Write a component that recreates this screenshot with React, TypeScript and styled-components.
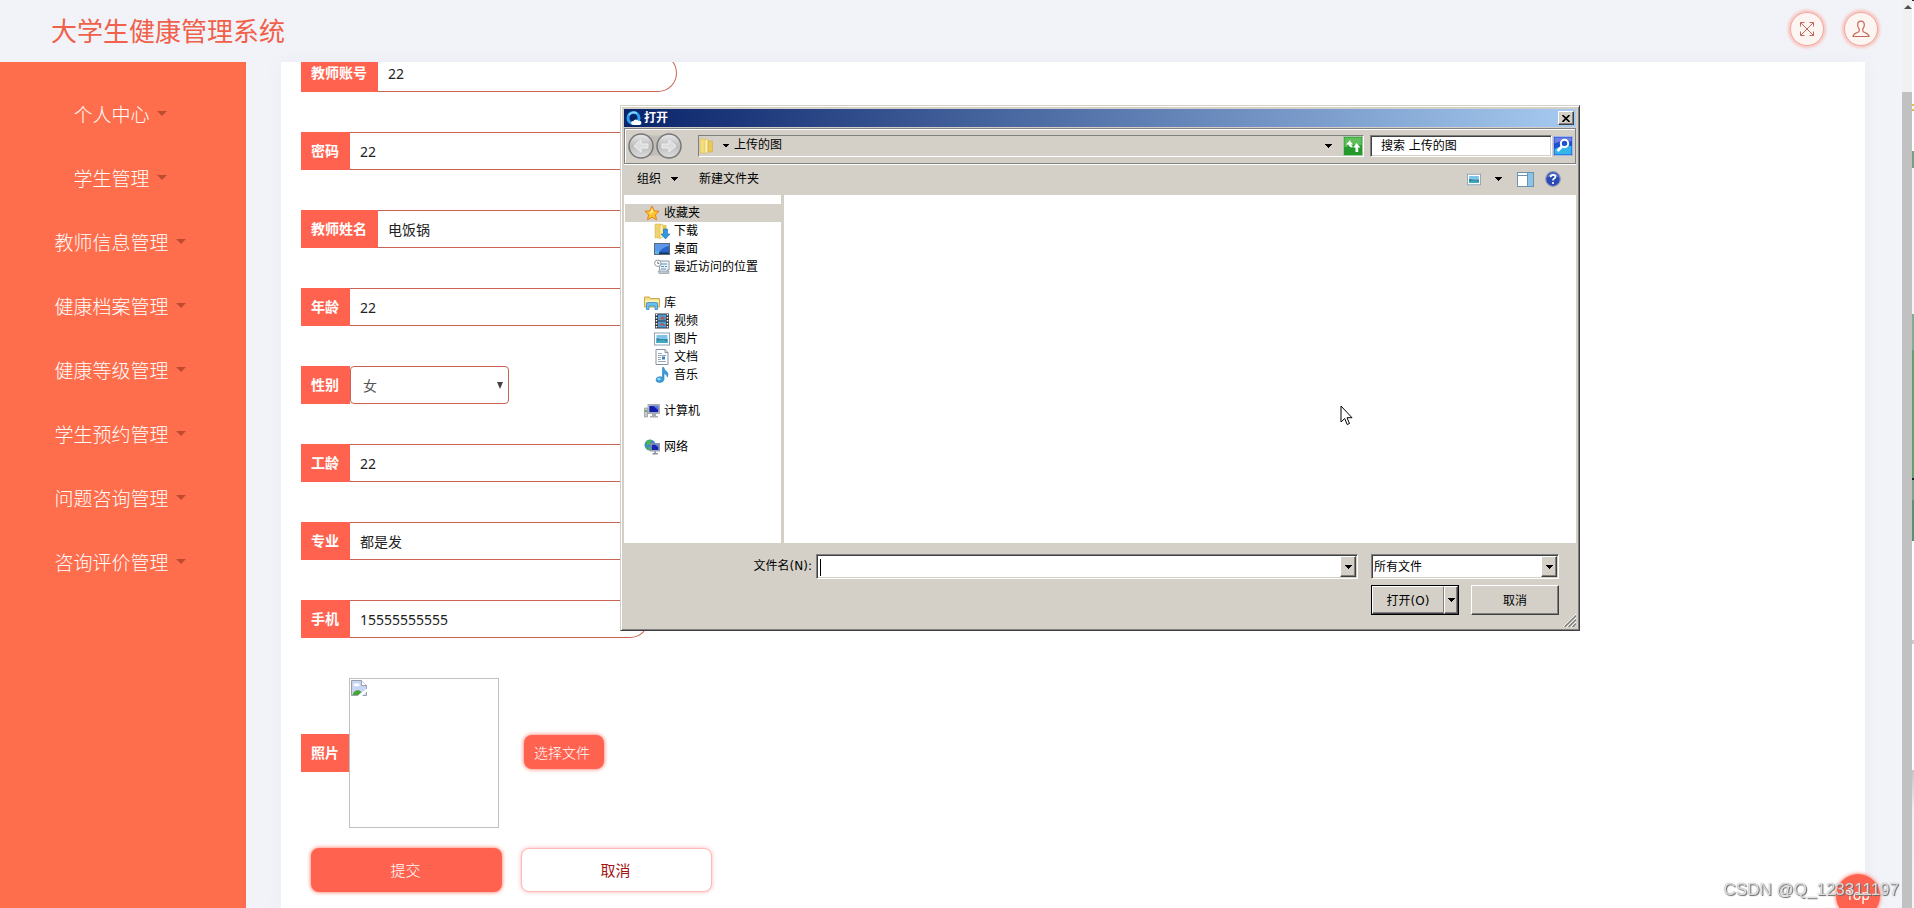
import React from "react";
import styled, { createGlobalStyle, css } from "styled-components";

const GlobalStyle = createGlobalStyle`
  * { box-sizing: border-box; }
  body {
    margin: 0;
    background: #f2f3f8;
    font-family: "Noto Sans", "Noto Sans CJK SC", sans-serif;
    font-size: 14px;
    overflow: hidden;
  }
  button, input, select { font-family: inherit; }
`;

/* ---------- page frame ---------- */

const Shell = styled.div`
  display: flex;
  height: 100vh;
  overflow: hidden;
`;

const Page = styled.div`
  flex: 1;
  min-width: 0;
  display: flex;
  flex-direction: column;
`;

const Header = styled.header`
  display: flex;
  justify-content: space-between;
  align-items: flex-start;
  padding: 12px 24px 14px 51px;
`;

const Title = styled.h1`
  margin: 0;
  font-size: 26px;
  line-height: 36px;
  font-weight: 400;
  color: #f0604a;
  font-family: "Noto Sans CJK SC", sans-serif;
`;

const HeaderTools = styled.div`
  display: flex;
  gap: 20px;
`;

const RoundButton = styled.button`
  width: 34px;
  height: 34px;
  padding: 0;
  display: grid;
  place-items: center;
  border: 1px solid #f3aaa2;
  border-radius: 50%;
  background: #fdf5f2;
  box-shadow: 0 0 3px 2px #f7c3be;
`;

const Body = styled.div`
  flex: 1;
  min-height: 0;
  display: flex;
`;

const Sidebar = styled.nav`
  width: 246px;
  flex: none;
  background: #ff6e4c;
  padding: 19px 0;
`;

const MenuList = styled.ul`
  list-style: none;
  margin: 0;
  padding: 0;
`;

const MenuLink = styled.a`
  display: flex;
  height: 64px;
  padding-right: 6px;
  align-items: center;
  justify-content: center;
  gap: 7px;
  color: #fff;
  font-size: 19px;
  font-weight: 300;
  text-decoration: none;
  font-family: "Noto Sans CJK SC", sans-serif;
`;

const MenuCaret = styled.span`
  border: 5px solid transparent;
  border-top-color: #bf4a30;
  border-bottom: 0;
`;

const Card = styled.main`
  flex: 1;
  min-width: 0;
  margin: 0 37px 0 35px;
  padding: 0 20px;
  overflow: hidden;
  background: #fff;
  box-shadow: 0 0 16px rgba(120, 130, 180, 0.06);
`;

/* ---------- form ---------- */

const Form = styled.form`
  margin-top: -8px;
  display: flex;
  flex-direction: column;
  gap: 20px;
`;

const Fields = styled.div`
  display: flex;
  flex-direction: column;
  gap: 40px;
`;

const Field = styled.div`
  display: flex;
  align-items: center;
`;

const FieldLabel = styled.label`
  height: 38px;
  line-height: 38px;
  padding: 0 11px 0 10px;
  background: #ff6350;
  color: #fff;
  font-weight: 700;
  white-space: nowrap;
`;

const TextInput = styled.input`
  width: 299px;
  height: 38px;
  padding: 0 10px;
  border: 1px solid #cb6355;
  border-left: 0;
  border-radius: 0 19px 19px 0;
  background: #fff;
  color: #222;
  font-size: 14px;
  outline: none;
`;

const SelectWrap = styled.div`
  display: grid;
  align-items: center;
  width: 159px;
  & > * { grid-area: 1 / 1; }
  & > svg { justify-self: end; margin-right: 6px; pointer-events: none; }
`;

const GenderSelect = styled.select`
  appearance: none;
  height: 38px;
  padding: 0 12px;
  border: 1px solid #cb6355;
  border-radius: 4px;
  background: #fff;
  color: #555;
  font-size: 14px;
  outline: none;
`;

const Photo = styled.div`
  width: 150px;
  height: 150px;
  margin: 0 25px 0 -1px;
  padding: 1px;
  border: 1px solid #c0c0c0;
`;

const SolidButton = styled.button`
  width: 80px;
  height: 34px;
  margin-bottom: 2px;
  padding: 0 10px;
  text-align: left;
  white-space: nowrap;
  border: 0;
  border-radius: 8px;
  background: #ff6350;
  color: #fff;
  font-size: 14px;
  font-weight: 300;
  box-shadow: 0 0 4px #ff6350;
`;

const Actions = styled.div`
  display: flex;
  gap: 19px;
  padding-left: 10px;
`;

const ActionButton = styled.button<{ $primary?: boolean }>`
  width: 191px;
  height: 44px;
  padding: 0 2px 1px 0;
  border-radius: 8px;
  font-size: 15px;
  font-weight: ${(p) => (p.$primary ? 300 : 400)};
  border: ${(p) => (p.$primary ? "0" : "1px solid #fbb9b9")};
  background: ${(p) => (p.$primary ? "#ff6350" : "#fff")};
  color: ${(p) => (p.$primary ? "#fff" : "#a31515")};
  box-shadow: 0 0 4px ${(p) => (p.$primary ? "#ff6350" : "#ffb3b3")};
`;

/* ---------- right edge ---------- */

const ScrollTrack = styled.div`
  width: 10px;
  flex: none;
  display: flex;
  flex-direction: column;
  background: #f1f1f1;
`;

const ScrollHead = styled.div`
  height: 92px;
  flex: none;
  padding: 5px 0 0 2px;
  & > svg { display: block; }
`;

const ScrollThumb = styled.div`
  flex: 1;
  background: #c1c1c1;
`;

const EdgeStrip = styled.div`
  width: 2px;
  flex: none;
  background: linear-gradient(
    #222 0 1px, #fff 1px 104px, #e2c23c 104px 106px, #fff 106px 109px, #e2c23c 109px 111px,
    #fff 111px 151px, #7d9c86 151px 168px, #f4f4f4 168px 314px,
    #86ab95 314px 350px, #5fa06d 350px 478px, #222 478px 480px, #7fa38c 480px 500px,
    #5f8f72 500px 541px, #fff 541px 640px, #ccc 640px 644px, #fff 644px 770px,
    #c4c4c4 770px, #f0f0f0 810px, #f4f4f4 908px
  );
`;

const TopButton = styled.button`
  position: fixed;
  right: 34px;
  bottom: -10px;
  width: 44px;
  height: 44px;
  padding: 0 0 4px;
  border: 0;
  border-radius: 50%;
  background: #ff6350;
  color: #fff;
  font-size: 14px;
  box-shadow: 0 0 4px #ff6350;
`;

const Watermark = styled.span`
  position: fixed;
  right: 15px;
  bottom: 8px;
  font: 17px/20px "Liberation Sans", sans-serif;
  color: rgba(255, 255, 255, 0.75);
  text-shadow: 1px 1px 1px #666, 0 0 1px #777;
  pointer-events: none;
`;

const Pointer = styled.svg`
  position: fixed;
  left: 1340px;
  top: 405px;
  pointer-events: none;
`;

/* ---------- file dialog ---------- */

const raised = css`
  border: 1px solid;
  border-color: #fff #404040 #404040 #fff;
  box-shadow: inset -1px -1px 0 #808080;
  background: #d4d0c8;
`;

const sunken = css`
  border: 1px solid;
  border-color: #808080 #fff #fff #808080;
  box-shadow: inset 1px 1px 0 #404040, inset -1px -1px 0 #d4d0c8;
  background: #fff;
`;

const Dialog = styled.section`
  position: fixed;
  left: 620px;
  top: 105px;
  width: 960px;
  height: 526px;
  display: flex;
  flex-direction: column;
  padding: 3px;
  border: 1px solid;
  border-color: #d4d0c8 #404040 #404040 #d4d0c8;
  box-shadow: inset 1px 1px 0 #fff, inset -1px -1px 0 #808080;
  background: #d4d0c8;
  color: #000;
  font-family: "DejaVu Sans", "Noto Sans CJK SC", sans-serif;
  font-size: 12px;
`;

const TitleBar = styled.div`
  height: 18px;
  flex: none;
  display: flex;
  align-items: center;
  gap: 2px;
  padding: 0 2px;
  background: linear-gradient(90deg, #0a246a, #a6caf0);
`;

const DialogTitle = styled.h2`
  flex: 1;
  margin: 0;
  font-size: 12px;
  line-height: 18px;
  color: #fff;
`;

const CloseButton = styled.button`
  ${raised}
  width: 16px;
  height: 14px;
  padding: 0;
  display: grid;
  place-items: center;
`;

const NavBar = styled.div`
  height: 36px;
  flex: none;
  margin-top: 1px;
  display: flex;
  align-items: center;
  padding: 0 2px 0 3px;
  border: 1px solid #808080;
  box-shadow: inset 1px 1px 0 #fff, 0 1px 0 #fff;
`;

const AddressBox = styled.div`
  flex: 1;
  height: 22px;
  margin: 0 6px 0 14px;
  display: flex;
  align-items: center;
  border: 1px solid;
  border-color: #808080 #fff #fff #808080;
`;

const AddressText = styled.span`
  flex: 1;
  padding: 0 0 2px 5px;
  line-height: 16px;
`;

const IconButton = styled.button<{ $gap?: number }>`
  padding: 0;
  border: 0;
  background: none;
  display: grid;
  place-items: center;
  margin-left: ${(p) => p.$gap ?? 0}px;
`;

const SearchInput = styled.input`
  ${sunken}
  width: 182px;
  height: 22px;
  margin-right: 1px;
  padding: 0 10px;
  font-size: 12px;
  color: #000;
  &::placeholder { color: #000; opacity: 1; }
`;

const ToolBar = styled.div`
  height: 31px;
  flex: none;
  display: flex;
  align-items: center;
  padding: 0 15px 1px 13px;
`;

const ToolText = styled.button`
  padding: 0;
  border: 0;
  background: none;
  display: flex;
  align-items: center;
  gap: 10px;
  margin-right: 21px;
  font-size: 12px;
  line-height: 18px;
  color: #000;
`;

const Spacer = styled.div`
  flex: 1;
`;

const Panes = styled.div`
  flex: 1;
  display: flex;
  background: #fff;
`;

const Tree = styled.ul`
  width: 160px;
  margin: 0;
  padding: 9px 0 0 1px;
  list-style: none;
  border-right: 3px solid #d4d0c8;
`;

const TreeRow = styled.li<{ $child?: boolean; $selected?: boolean; $spaced?: boolean }>`
  height: 18px;
  display: flex;
  align-items: center;
  gap: 4px;
  line-height: 18px;
  padding-left: ${(p) => (p.$child ? 29 : 19)}px;
  margin-top: ${(p) => (p.$spaced ? 18 : 0)}px;
  background: ${(p) => (p.$selected ? "#d4d0c8" : "transparent")};
  & > svg { flex: none; }
`;

const Footer = styled.div`
  height: 84px;
  flex: none;
  display: grid;
  grid-template-columns: 1fr 542px 188px;
  column-gap: 13px;
  row-gap: 6px;
  align-content: start;
  padding: 11px 17px 0 0;
`;

const FileLabel = styled.label`
  margin-right: -9px;
  text-align: right;
  line-height: 25px;
`;

const Combo = styled.div`
  ${sunken}
  display: flex;
  height: 25px;
  padding: 1px;
`;

const ComboInput = styled.input`
  flex: 1;
  min-width: 0;
  padding: 0 2px;
  border: 0;
  outline: none;
  font-size: 12px;
  background: transparent;
`;

const Caret = styled.span`
  width: 1px;
  height: 17px;
  margin: 3px 0 0 2px;
  background: #000;
`;

const ComboSelect = styled.select`
  appearance: none;
  flex: 1;
  padding: 0 1px;
  border: 0;
  background: transparent;
  font-size: 12px;
  color: #000;
`;

const DropButton = styled.button`
  ${raised}
  width: 16px;
  padding: 0;
  display: grid;
  place-items: center;
`;

const DialogButtons = styled.div`
  grid-column: 3;
  display: flex;
  gap: 12px;
`;

const SplitButton = styled.div`
  width: 88px;
  height: 30px;
  display: flex;
  border: 1px solid #000;
`;

const ClassicButton = styled.button<{ $width: number }>`
  ${raised}
  width: ${(p) => p.$width}px;
  padding: 0 0 1px;
  display: grid;
  place-items: center;
  font-size: 12px;
  color: #000;
`;

const SplitMain = styled(ClassicButton)`
  border-right-color: #808080;
  box-shadow: inset 0 -1px 0 #808080;
`;

const Grip = styled.svg`
  position: absolute;
  right: 3px;
  bottom: 3px;
`;

/* ---------- icons ---------- */

const Down = ({ w = 7 }: { w?: number }) => (
  <svg width={w} height="4" viewBox="0 0 8 4" preserveAspectRatio="none" shapeRendering="crispEdges">
    <path d="M0 0h8L4 4z" fill="#000" />
  </svg>
);

const ExpandIcon = () => (
  <svg width="16" height="16" viewBox="0 0 16 16" fill="none" stroke="#c4685c" strokeWidth="1">
    <path d="M1.5 1.5l13 13M14.5 1.5l-13 13M1.5 5.5v-4h4M10.5 1.5h4v4M14.5 10.5v4h-4M5.5 14.5h-4v-4" />
  </svg>
);

const PersonIcon = () => (
  <svg width="18" height="18" viewBox="0 0 18 18" fill="none" stroke="#c4685c" strokeWidth="1.2">
    <path d="M9 1.2c-2.300 0-3.300 1.500-3.300 3.800 0 1.700.5 3 1.500 4v2c0 .8-1 1.200-2.500 1.800C2.300 13.700 1.200 14.300 1 16.500h16c-.2-2.200-1.300-2.800-3.700-3.700-1.500-.6-2.500-1-2.500-1.800V9c1-1 1.500-2.300 1.500-4 0-2.300-1-3.800-3.300-3.800z" />
  </svg>
);

const BrokenImage = () => (
  <svg width="16" height="16" viewBox="0 0 16 16">
    <path d="M.5.5h10l5 5v10H.5z" fill="#c6d5f5" stroke="#9aa0a8" />
    <path d="M10.5.5v5h5" fill="#fff" stroke="#9aa0a8" />
    <ellipse cx="5.500" cy="4.800" rx="3" ry="1.500" fill="#fff" />
    <path d="M1.500 15c1-4 4-5.500 7-4.500l2 1.500-3 3z" fill="#45a532" />
    <path d="M6.500 16l9.500-7.500v3L11 16z" fill="#fff" />
  </svg>
);

const BrowserIcon = () => (
  <svg width="16" height="16" viewBox="0 0 16 16">
    <circle cx="7.500" cy="8" r="5.500" fill="#0a246a" stroke="#2da0ee" strokeWidth="3" />
    <path d="M3 5a5.500 5.500 0 0 1 8-1.500" fill="none" stroke="#8ad6ff" strokeWidth="1.500" />
    <path d="M7 15a2 2 0 0 1 .3-4 3 3 0 0 1 5.200 0A2 2 0 0 1 14 15z" fill="#fff" />
  </svg>
);

const NavArrows = () => (
  <svg width="56" height="28" viewBox="0 0 56 28">
    <defs>
      <linearGradient id="knob" x1="0" y1="0" x2="0" y2="1">
        <stop offset="0" stopColor="#e9e9e9" />
        <stop offset=".5" stopColor="#bdbdbd" />
        <stop offset="1" stopColor="#dedede" />
      </linearGradient>
    </defs>
    <path d="M13 1q15 5 29 0v25q-14-5-29 0z" fill="#c2beb7" />
    {[13, 41].map((cx) => (
      <circle key={cx} cx={cx} cy="14" r="12" fill="url(#knob)" stroke="#77777a" strokeWidth="1.500" />
    ))}
    <path
      d="M6 14l7-6v4h7v4h-7v4zM48 14l-7-6v4h-7v4h7v4z"
      fill="#dcdcdc"
      stroke="#f0f0f0"
    />
  </svg>
);

const FolderIcon = () => (
  <svg width="16" height="16" viewBox="0 0 16 16">
    <path d="M1 1h6v14H1z" fill="#f3dc7c" stroke="#d4b550" strokeWidth=".5" />
    <path d="M6 2.500l3-1.500v13l-3 1.500z" fill="#fff3b4" stroke="#d4b550" strokeWidth=".5" />
    <path d="M9 3h4.500v11H9z" fill="#ecc956" stroke="#c9a63c" strokeWidth=".5" />
  </svg>
);

const RefreshIcon = () => (
  <svg width="20" height="20" viewBox="0 0 20 20">
    <rect x=".5" y=".5" width="19" height="19" rx="1" fill="#249a2c" stroke="#a3c9a3" />
    <path d="M1.500 1.500h17v8q-8-3-17 2z" fill="#5fbf5a" />
    <path d="M7.500 3.500L3 8.500h2.700q.3 3 3.800 3V9.500Q8 9.500 8 8.500h2L7 5z" fill="#fff" />
    <path d="M13.500 7l4 4.500h-2.300V16h-2.700v-4.500H10z" fill="#fff" />
  </svg>
);

const SearchIcon = () => (
  <svg width="20" height="20" viewBox="0 0 20 20">
    <rect x=".5" y=".5" width="19" height="19" rx="1" fill="#1f4fd0" stroke="#9fb6e6" />
    <path d="M1.500 13q9-5 17-3v8.500h-17z" fill="#35b4ea" />
    <path d="M1.500 1.500h17v4q-9-2-17 2z" fill="#6f7fe6" />
    <circle cx="11.500" cy="7.500" r="3.700" fill="none" stroke="#fff" strokeWidth="2" />
    <path d="M8.800 10.500L4.500 15" stroke="#fff" strokeWidth="2.600" />
  </svg>
);

const Picture = ({ w = 16, h = 16 }: { w?: number; h?: number }) => (
  <svg width={w} height={h} viewBox="0 0 16 16">
    <rect x=".5" y="2" width="15" height="12" fill="#fff" stroke="#8ba0b4" />
    <path d="M2.500 4h11v8h-11z" fill="#7ec4e8" />
    <path d="M2.500 7q4 2 11 1v4h-11z" fill="#2b7f8e" />
    <path d="M2.500 10q5-2 11 .5V12h-11z" fill="#3fa9c4" />
  </svg>
);

const PaneIcon = () => (
  <svg width="17" height="15" viewBox="0 0 17 15">
    <rect x=".5" y=".5" width="16" height="14" fill="#fff" stroke="#6b93b4" />
    <path d="M.5 3.500h10M10.500.5v14" stroke="#6b93b4" />
    <path d="M11 1h5v13h-5z" fill="#8cc4e4" />
  </svg>
);

const HelpIcon = () => (
  <svg width="16" height="16" viewBox="0 0 16 16">
    <circle cx="8" cy="8" r="7.300" fill="#2b49b4" stroke="#8c98b8" strokeWidth="1.200" />
    <path d="M2.500 6a6 6 0 0 1 11 0q-5-2-11 0z" fill="#8098e0" />
    <path d="M5.700 6.200q0-2.400 2.400-2.400 2.300 0 2.300 2 0 1.200-1.200 1.800Q8 8.200 8 9.400" fill="none" stroke="#fff" strokeWidth="1.700" />
    <circle cx="8" cy="12" r="1.100" fill="#fff" />
  </svg>
);

const StarIcon = () => (
  <svg width="16" height="16" viewBox="0 0 16 16">
    <path d="M8 1l2.100 4.700 5 .6-3.700 3.400 1.100 5.100L8 12.200l-4.500 2.600 1.100-5.100L.9 6.300l5-.6z" fill="#fcc42c" stroke="#ea7e1c" />
    <path d="M8 3.200l1.400 3.300L5.500 10z" fill="#fff0a0" />
  </svg>
);

const DownloadIcon = () => (
  <svg width="16" height="16" viewBox="0 0 16 16">
    <path d="M1 1h6v14H1z" fill="#efd36c" stroke="#cfae4a" strokeWidth=".5" />
    <path d="M6 2.500L9 1v13l-3 1.500z" fill="#fff2b0" stroke="#cfae4a" strokeWidth=".5" />
    <path d="M9 2h3.500v10H9z" fill="#e7c454" />
    <path d="M9.500 6h4v5H16l-4.500 5L7 11h2.500z" fill="#2f9ae0" stroke="#1c6cae" strokeWidth=".6" />
  </svg>
);

const DesktopIcon = () => (
  <svg width="16" height="16" viewBox="0 0 16 16">
    <rect x=".5" y="2.500" width="15" height="11" fill="#2b64c8" stroke="#5a6a7a" />
    <path d="M1 3h14v2Q9 6 5 11H1z" fill="#5c98ea" />
    <path d="M1 11.500h14V13H1z" fill="#16345c" />
    <path d="M1 10h4v3H1z" fill="#58b4e8" />
  </svg>
);

const RecentIcon = () => (
  <svg width="16" height="16" viewBox="0 0 16 16">
    <path d="M5 2h10v9h-2v3H6z" fill="#eef3f8" stroke="#8d9aa8" />
    <path d="M4 12h11v2.500H5z" fill="#c0c8d2" stroke="#8d9aa8" strokeWidth=".6" />
    <path d="M7 5h6M7 7.500h3M11 7.500h2M7 10h5" stroke="#5b8fc0" />
    <circle cx="3.800" cy="4.200" r="3.200" fill="#fff" stroke="#8d9aa8" />
    <path d="M3.800 2.500v2h1.500" fill="none" stroke="#555" strokeWidth=".8" />
  </svg>
);

const LibraryIcon = () => (
  <svg width="16" height="16" viewBox="0 0 16 16">
    <path d="M.5 2h5l1 1.500h9V12H.5z" fill="#f2dc84" stroke="#c8ac50" />
    <path d="M1 5.500h14v1.500H1z" fill="#fff6c8" />
    <path d="M2.500 14.500V9q0-1.500 1.500-1.500h8q1.500 0 1.500 1.500v5.500H11V11H5v3.500z" fill="#6cc0ec" stroke="#3a8cc0" strokeWidth=".8" />
  </svg>
);

const VideoIcon = () => (
  <svg width="16" height="16" viewBox="0 0 16 16">
    <path d="M1 .5h14v15H1z" fill="#33383e" />
    <path d="M4 1.500h8v6H4zM4 8.500h8v6H4z" fill="#4d9ad8" />
    <path d="M6 6l2-3 3 2-1 2zM5 12l3-2 2 1 1 2z" fill="#b45a4a" />
    <path d="M2.500 1v14M13.500 1v14" stroke="#fff" strokeWidth="1.500" strokeDasharray="1.500 1.500" />
  </svg>
);

const DocumentIcon = () => (
  <svg width="16" height="16" viewBox="0 0 16 16">
    <path d="M2 .5h9l3 3v12H2z" fill="#fff" stroke="#8793a0" />
    <path d="M11 .5v3h3" fill="none" stroke="#8793a0" />
    <path d="M4 4.500h4M4 6.500h8M4 8.500h3M4 10.500h3M4 12.500h8" stroke="#9aa8b8" />
    <path d="M8 7.500h3v3H8z" fill="#3a7fc4" />
  </svg>
);

const MusicIcon = () => (
  <svg width="16" height="16" viewBox="0 0 16 16">
    <path d="M8.500.5h1.300q.4 2.500 2.800 4 2.400 2 .8 5.500-.3-3-3.400-3.500v6q-.5 3-4.500 3Q2 15.300 2 12.700q.3-3 4-3 1.500 0 2.500.6z" fill="#3a9fdc" stroke="#2a78b4" strokeWidth=".6" />
    <ellipse cx="5" cy="12" rx="1.700" ry="1.200" fill="#9adcf8" />
  </svg>
);

const ComputerIcon = () => (
  <svg width="16" height="16" viewBox="0 0 16 16">
    <path d="M.5 5h3v9h-3z" fill="#c8ccd0" stroke="#8a9096" strokeWidth=".7" />
    <path d="M1.200 7h1.600v2H1.200z" fill="#4aa83c" />
    <rect x="4" y="1.500" width="11.500" height="9" fill="#c4c8cc" stroke="#999ea4" strokeWidth=".8" />
    <path d="M5.300 2.800h9v6.400h-9z" fill="#1420a8" />
    <path d="M9 2.800h5.300V7z" fill="#5a78e4" />
    <path d="M8 11h4v2h2v1.500H6V13h2z" fill="#a8acb2" />
  </svg>
);

const NetworkIcon = () => (
  <svg width="16" height="16" viewBox="0 0 16 16">
    <circle cx="6" cy="6" r="5.500" fill="#3b8ad0" />
    <path d="M2 3q3-3 6-2L6 5 3 7zM4 8l3 1-1 2.500Q3.500 11 2 9z" fill="#4cb44c" />
    <rect x="6.500" y="4.500" width="9" height="7.500" fill="#c4c8cc" stroke="#80868e" strokeWidth=".8" />
    <path d="M7.500 5.500h7V11h-7z" fill="#1428b0" />
    <path d="M11 5.500h3.500v3z" fill="#6a8cf0" />
    <path d="M10.300 12h1.500v2h2v1.500H8.500V14h1.800z" fill="#8a9098" />
  </svg>
);

/* ---------- content ---------- */

const menu = [
  "个人中心",
  "学生管理",
  "教师信息管理",
  "健康档案管理",
  "健康等级管理",
  "学生预约管理",
  "问题咨询管理",
  "咨询评价管理",
];

type FieldDef = { id: string; label: string; value: string; select?: boolean };

const fields: FieldDef[] = [
  { id: "account", label: "教师账号", value: "22" },
  { id: "password", label: "密码", value: "22" },
  { id: "name", label: "教师姓名", value: "电饭锅" },
  { id: "age", label: "年龄", value: "22" },
  { id: "gender", label: "性别", value: "女", select: true },
  { id: "years", label: "工龄", value: "22" },
  { id: "major", label: "专业", value: "都是发" },
  { id: "phone", label: "手机", value: "15555555555" },
];

const tree = [
  { text: "收藏夹", Icon: StarIcon, selected: true },
  { text: "下载", Icon: DownloadIcon, child: true },
  { text: "桌面", Icon: DesktopIcon, child: true },
  { text: "最近访问的位置", Icon: RecentIcon, child: true },
  { text: "库", Icon: LibraryIcon, spaced: true },
  { text: "视频", Icon: VideoIcon, child: true },
  { text: "图片", Icon: Picture, child: true },
  { text: "文档", Icon: DocumentIcon, child: true },
  { text: "音乐", Icon: MusicIcon, child: true },
  { text: "计算机", Icon: ComputerIcon, spaced: true },
  { text: "网络", Icon: NetworkIcon, spaced: true },
];

const FileDialog = () => (
  <Dialog role="dialog" aria-label="打开">
    <TitleBar>
      <BrowserIcon />
      <DialogTitle>打开</DialogTitle>
      <CloseButton type="button" aria-label="关闭">
        <svg width="8" height="7" viewBox="0 0 8 7">
          <path d="M.5 0l7 7M7.500 0l-7 7" stroke="#000" strokeWidth="1.600" />
        </svg>
      </CloseButton>
    </TitleBar>
    <NavBar>
      <NavArrows />
      <AddressBox>
        <FolderIcon />
        <IconButton type="button" aria-label="展开" $gap={8}>
          <Down w={6} />
        </IconButton>
        <AddressText>上传的图</AddressText>
        <IconButton type="button" aria-label="历史">
          <Down />
        </IconButton>
        <IconButton type="button" aria-label="刷新" $gap={11}>
          <RefreshIcon />
        </IconButton>
      </AddressBox>
      <SearchInput aria-label="搜索" placeholder="搜索 上传的图" />
      <IconButton type="button" aria-label="查找">
        <SearchIcon />
      </IconButton>
    </NavBar>
    <ToolBar>
      <ToolText type="button">
        组织 <Down />
      </ToolText>
      <ToolText type="button">新建文件夹</ToolText>
      <Spacer />
      <IconButton type="button" aria-label="视图">
        <Picture w={14} h={15} />
      </IconButton>
      <IconButton type="button" aria-label="更多视图" $gap={14}>
        <Down />
      </IconButton>
      <IconButton type="button" aria-label="预览窗格" $gap={15}>
        <PaneIcon />
      </IconButton>
      <IconButton type="button" aria-label="帮助" $gap={11}>
        <HelpIcon />
      </IconButton>
    </ToolBar>
    <Panes>
      <Tree>
        {tree.map(({ text, Icon, child, selected, spaced }) => (
          <TreeRow key={text} $child={child} $selected={selected} $spaced={spaced}>
            <Icon />
            {text}
          </TreeRow>
        ))}
      </Tree>
    </Panes>
    <Footer>
      <FileLabel htmlFor="filename">文件名(N):</FileLabel>
      <Combo>
        <Caret />
        <ComboInput id="filename" />
        <DropButton type="button" aria-label="文件名列表">
          <Down />
        </DropButton>
      </Combo>
      <Combo>
        <ComboSelect aria-label="文件类型">
          <option>所有文件</option>
        </ComboSelect>
        <DropButton type="button" aria-label="类型列表" tabIndex={-1}>
          <Down />
        </DropButton>
      </Combo>
      <DialogButtons>
        <SplitButton>
          <SplitMain type="button" $width={72}>
            打开(O)
          </SplitMain>
          <ClassicButton type="button" $width={14} aria-label="打开方式">
            <Down />
          </ClassicButton>
        </SplitButton>
        <ClassicButton type="button" $width={88}>
          取消
        </ClassicButton>
      </DialogButtons>
    </Footer>
    <Grip width="13" height="13" viewBox="0 0 13 13" fill="none">
      <path d="M0 13L13 0M4 13l9-9M8 13l5-5" stroke="#fff" />
      <path d="M1.500 13L13 1.500M5.500 13L13 5.500M9.500 13L13 9.500" stroke="#808080" strokeWidth="1.500" />
    </Grip>
  </Dialog>
);

export default function App() {
  return (
    <>
      <GlobalStyle />
      <Shell>
        <Page>
          <Header>
            <Title>大学生健康管理系统</Title>
            <HeaderTools>
              <RoundButton type="button" aria-label="全屏">
                <ExpandIcon />
              </RoundButton>
              <RoundButton type="button" aria-label="用户">
                <PersonIcon />
              </RoundButton>
            </HeaderTools>
          </Header>
          <Body>
            <Sidebar>
              <MenuList>
                {menu.map((item) => (
                  <li key={item}>
                    <MenuLink href="#">
                      {item}
                      <MenuCaret />
                    </MenuLink>
                  </li>
                ))}
              </MenuList>
            </Sidebar>
            <Card>
              <Form onSubmit={(e) => e.preventDefault()}>
                <Fields>
                  {fields.map((f) => (
                    <Field key={f.id}>
                      <FieldLabel htmlFor={f.id}>{f.label}</FieldLabel>
                      {f.select ? (
                        <SelectWrap>
                          <GenderSelect id={f.id}>
                            <option>{f.value}</option>
                          </GenderSelect>
                          <svg width="6" height="7" viewBox="0 0 6 7">
                            <path d="M0 0h6L3 7z" fill="#444" />
                          </svg>
                        </SelectWrap>
                      ) : (
                        <TextInput id={f.id} defaultValue={f.value} />
                      )}
                    </Field>
                  ))}
                  <Field>
                    <FieldLabel htmlFor="photo">照片</FieldLabel>
                    <Photo>
                      <BrokenImage />
                    </Photo>
                    <SolidButton id="photo" type="button">
                      选择文件
                    </SolidButton>
                  </Field>
                </Fields>
                <Actions>
                  <ActionButton type="submit" $primary>
                    提交
                  </ActionButton>
                  <ActionButton type="button">取消</ActionButton>
                </Actions>
              </Form>
            </Card>
          </Body>
        </Page>
        <ScrollTrack>
          <ScrollHead>
            <svg width="8" height="4" viewBox="0 0 8 4">
              <path d="M0 4h8L4 0z" fill="#505050" />
            </svg>
          </ScrollHead>
          <ScrollThumb />
        </ScrollTrack>
        <EdgeStrip />
      </Shell>
      <TopButton type="button">Top</TopButton>
      <FileDialog />
      <Pointer width="13" height="21" viewBox="0 0 13 21">
        <path d="M1 1v16l3.700-3.500 2.500 6 2.300-1-2.500-5.800H12z" fill="#fff" stroke="#000" />
      </Pointer>
      <Watermark>CSDN @Q_123311197</Watermark>
    </>
  );
}
